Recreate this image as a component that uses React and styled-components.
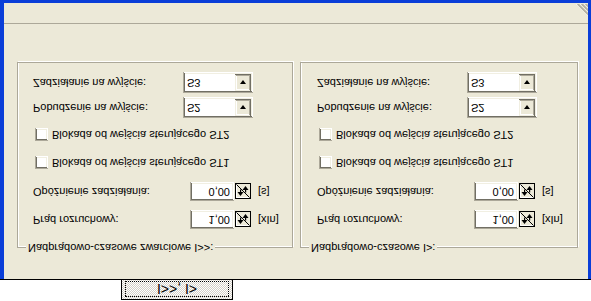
import React from 'react';
import styled, { createGlobalStyle } from 'styled-components';

const Global = createGlobalStyle`
  html, body { margin: 0; padding: 0; background: #fff; overflow: hidden; }
  body { font-family: "Liberation Sans", Arial, sans-serif; font-size: 11px; color: #000; }
  #root { width: 591px; height: 301px; }
`;

const Screen = styled.div`
  width: 591px;
  height: 301px;
  display: flex;
  flex-direction: column;
  transform: scaleY(-1);
  overflow: hidden;
`;

const TabStrip = styled.div`
  height: 21px;
  background: #fff;
  border-bottom: 1px solid #000;
  display: flex;
  align-items: flex-end;
  padding-left: 121px;
`;

const Tab = styled.div`
  width: 112px;
  height: 20px;
  box-sizing: border-box;
  border: 1px solid #000;
  border-bottom: none;
  background: repeating-conic-gradient(#d4d0c8 0 25%, #ffffff 0 50%) 0 0 / 2px 2px;
  padding: 2px 3px 1px 3px;
  display: flex;
`;

const TabFocus = styled.div`
  flex: 1;
  border: 1px dotted #000;
  display: flex;
  align-items: center;
  justify-content: center;
  font-size: 14px;
  line-height: 14px;
`;

const Window = styled.div`
  flex: 1;
  display: flex;
  flex-direction: column;
  background: #ece9d8;
  border-left: 4px solid #0a3ed8;
  border-right: 3px solid #0a3ed8;
  border-bottom: 3px solid #0a3ed8;
`;

const Body = styled.div`
  flex: 1;
  display: flex;
  align-items: flex-start;
  gap: 7px;
  padding: 31px 10px 0 13px;
`;

const StatusBar = styled.div`
  height: 19px;
  border-top: 1px solid #aca899;
  display: flex;
  justify-content: flex-end;
  align-items: flex-end;
  padding-bottom: 1px;
`;

const Group = styled.div`
  position: relative;
  width: ${p => p.$w}px;
  height: 186px;
  box-sizing: border-box;
  border: 1px solid #aca899;
  box-shadow: inset 1px 1px 0 #ffffff, 1px 1px 0 #ffffff;
  display: flex;
  flex-direction: column;
  padding-left: ${p => p.$pl}px;
`;

const Caption = styled.span`
  position: absolute;
  left: 8px;
  top: -7px;
  padding: 0 2px;
  background: #ece9d8;
  line-height: 13px;
  white-space: nowrap;
`;

const Row = styled.div`
  display: flex;
  align-items: center;
  height: ${p => p.$h}px;
  margin-top: ${p => p.$mt}px;
`;

const Label = styled.span`
  width: ${p => p.$w}px;
  white-space: nowrap;
  line-height: 13px;
`;

const sunken = `
  box-shadow: inset 1px 1px #aca899, inset -1px -1px #ffffff,
    inset 2px 2px #716f64, inset -2px -2px #f1efe2;
`;

const Edit = styled.div`
  width: 44px;
  height: 19px;
  box-sizing: border-box;
  background: #fff;
  ${sunken}
  display: flex;
  align-items: center;
  justify-content: flex-end;
  padding-right: 4px;
  line-height: 13px;
`;

const Spin = styled.svg`
  width: 16px;
  height: 16px;
  margin-left: 1px;
  display: block;
`;

const Unit = styled.span`
  margin-left: 7px;
  line-height: 13px;
`;

const Combo = styled.div`
  width: 70px;
  height: 21px;
  box-sizing: border-box;
  background: #fff;
  ${sunken}
  padding: 2px;
  display: flex;
  align-items: stretch;
`;

const ComboText = styled.span`
  flex: 1;
  display: flex;
  align-items: center;
  padding-left: 2px;
  line-height: 13px;
`;

const ComboButton = styled.div`
  width: 16px;
  background: #ece9d8;
  box-shadow: inset -1px -1px #716f64, inset 1px 1px #f1efe2,
    inset -2px -2px #aca899, inset 2px 2px #ffffff;
  display: flex;
  align-items: center;
  justify-content: center;
`;

const Arrow = styled.span`
  width: 0;
  height: 0;
  border-left: 3.5px solid transparent;
  border-right: 3.5px solid transparent;
  border-top: 4px solid #000;
`;

const CheckBox = styled.span`
  width: 13px;
  height: 13px;
  box-sizing: border-box;
  background: #fff;
  ${sunken}
  margin-left: 2px;
  margin-right: 4px;
`;

const SpinIcon = () => (
  <Spin viewBox="0 0 16 16">
    <rect x="0" y="0" width="16" height="16" fill="#000" />
    <rect x="1" y="1" width="14" height="14" fill="#ece9d8" />
    <path d="M1 1h13M1 1v13" stroke="#fff" strokeWidth="1" transform="translate(0.5 0.5)" />
    <path d="M1.5 14.5L14.5 1.5" stroke="#000" strokeWidth="1" />
    <path d="M2.5 7L5.5 3L8.5 7Z" fill="#000" />
    <path d="M5 6h1.2v3.5h-1.2z" fill="#000" />
    <path d="M7.5 9L10.5 13L13.5 9Z" fill="#000" />
    <path d="M10 6.5h1.2v3h-1.2z" fill="#000" />
  </Spin>
);

const Grip = () => (
  <svg width="12" height="12" viewBox="0 0 12 12" style={{ display: 'block' }}>
    {[0, 4, 8].map(k => (
      <g key={k}>
        <line x1={k + 0.5} y1="12" x2="12" y2={k + 0.5} stroke="#fff" strokeWidth="1" />
        <line x1={k + 1.5} y1="12" x2="12" y2={k + 1.5} stroke="#aca899" strokeWidth="1.2" />
        <line x1={k + 2.5} y1="12" x2="12" y2={k + 2.5} stroke="#aca899" strokeWidth="1" />
      </g>
    ))}
  </svg>
);

const Panel = ({ title, w, pl, z, p }) => (
  <Group $w={w} $pl={pl}>
    <Caption>{title}</Caption>
    <Row $h={19} $mt={18}>
      <Label $w={157}>Prąd rozruchowy:</Label>
      <Edit>1,00</Edit>
      <SpinIcon />
      <Unit>[xIn]</Unit>
    </Row>
    <Row $h={19} $mt={9}>
      <Label $w={157}>Opóźnienie zadziałania:</Label>
      <Edit>0,00</Edit>
      <SpinIcon />
      <Unit>[s]</Unit>
    </Row>
    <Row $h={13} $mt={13}>
      <CheckBox />
      <Label>Blokada od wejścia sterującego ST1</Label>
    </Row>
    <Row $h={13} $mt={15}>
      <CheckBox />
      <Label>Blokada od wejścia sterującego ST2</Label>
    </Row>
    <Row $h={21} $mt={10}>
      <Label $w={150}>Pobudzenie na wyjście:</Label>
      <Combo>
        <ComboText>{p}</ComboText>
        <ComboButton><Arrow /></ComboButton>
      </Combo>
    </Row>
    <Row $h={21} $mt={4}>
      <Label $w={150}>Zadziałanie na wyjście:</Label>
      <Combo>
        <ComboText>{z}</ComboText>
        <ComboButton><Arrow /></ComboButton>
      </Combo>
    </Row>
  </Group>
);

export default function App() {
  return (
    <>
      <Global />
      <Screen>
        <TabStrip>
          <Tab>
            <TabFocus>I&gt;&gt;, I&gt;</TabFocus>
          </Tab>
        </TabStrip>
        <Window>
          <Body>
            <Panel title="Nadprądowo-czasowe zwarciowe I>>:" w={276} pl={15} p="S2" z="S3" />
            <Panel title="Nadprądowo-czasowe I>:" w={278} pl={16} p="S2" z="S3" />
          </Body>
          <StatusBar>
            <Grip />
          </StatusBar>
        </Window>
      </Screen>
    </>
  );
}
